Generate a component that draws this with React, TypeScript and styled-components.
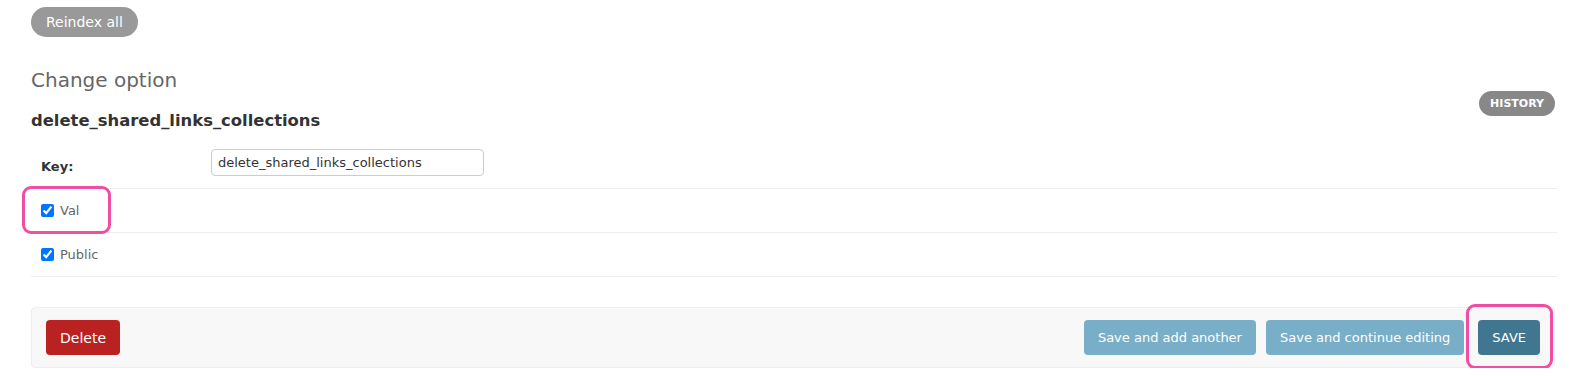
import React from "react";
import styled, { createGlobalStyle } from "styled-components";

const Global = createGlobalStyle`
  html, body { margin: 0; padding: 0; background: #fff; }
  body { font-family: "DejaVu Sans", Verdana, sans-serif; color: #333; font-size: 13px; }
`;

const Page = styled.div`
  padding: 7px 17px 0 31px;
  width: 1570px;
  box-sizing: border-box;
`;

const PillButton = styled.button`
  background: #999;
  color: #fff;
  border: none;
  border-radius: 15px;
  height: 30px;
  padding: 0 15px;
  font-family: inherit;
  font-size: 14px;
  cursor: pointer;
`;

const Heading = styled.h1`
  margin: 31px 0 0;
  font-size: 20px;
  font-weight: 400;
  color: #666;
  line-height: 24px;
`;

const TitleBar = styled.div`
  display: flex;
  justify-content: space-between;
  align-items: flex-start;
  margin-right: -2px;
`;

const Title = styled.h2`
  margin: 19px 0 0;
  font-size: 16.4px;
  font-weight: 700;
  color: #333;
  line-height: 20px;
`;

const HistoryButton = styled.a`
  margin-top: -1px;
  background: #888;
  color: #fff;
  border-radius: 13px;
  height: 25px;
  padding: 0 11px;
  display: inline-flex;
  align-items: center;
  font-size: 11px;
  font-weight: 700;
  letter-spacing: 0;
  text-transform: uppercase;
`;

const Fieldset = styled.div`
  margin-top: 10px;
`;

const Row = styled.div<{ $h: number }>`
  position: relative;
  display: flex;
  align-items: center;
  height: ${(p) => p.$h}px;
  box-sizing: border-box;
  padding: 0 10px;
  border-bottom: 1px solid #eee;
  margin-right: -4px;
`;

const KeyLabel = styled.label`
  width: 170px;
  font-weight: 700;
  font-size: 13px;
  color: #333;
  padding-top: 4px;
`;

const TextInput = styled.input`
  width: 273px;
  height: 27px;
  margin-bottom: 5px;
  box-sizing: border-box;
  border: 1px solid #ccc;
  border-radius: 4px;
  padding: 0 6px;
  font-family: inherit;
  font-size: 13px;
  color: #333;
`;

const CheckLabel = styled.label`
  display: flex;
  align-items: center;
  gap: 6px;
  font-size: 13px;
  color: #666;
`;

const Checkbox = styled.input`
  margin: 0;
  width: 13px;
  height: 13px;
`;

const Highlight = styled.span<{ $l: number; $t: number; $w: number; $h: number }>`
  position: absolute;
  left: ${(p) => p.$l}px;
  top: ${(p) => p.$t}px;
  width: ${(p) => p.$w}px;
  height: ${(p) => p.$h}px;
  border: 3px solid #ee4fa3;
  border-radius: 9px;
  box-sizing: border-box;
  pointer-events: none;
`;

const SubmitRow = styled.div`
  position: relative;
  margin-top: 30px;
  margin-right: -2px;
  height: 61px;
  box-sizing: border-box;
  background: #f8f8f8;
  border: 1px solid #eee;
  border-radius: 4px;
  display: flex;
  align-items: center;
  padding: 0 14px;
  gap: 10px;
`;

const Spacer = styled.div`
  flex: 1;
`;

const ActionButton = styled.button<{ $variant: "delete" | "light" | "primary" }>`
  height: 35px;
  border: none;
  border-radius: 4px;
  padding: 0 14px;
  font-family: inherit;
  font-size: ${(p) => (p.$variant === "delete" ? "14px" : "13px")};
  color: #fff;
  cursor: pointer;
  background: ${(p) =>
    p.$variant === "delete" ? "#ba2121" : p.$variant === "primary" ? "#417690" : "#79aec8"};
  ${(p) => (p.$variant === "primary" ? "margin-left: 4px;" : "")}
`;

export default function App() {
  return (
    <>
      <Global />
      <Page>
        <PillButton>Reindex all</PillButton>
        <Heading>Change option</Heading>
        <TitleBar>
          <Title>delete_shared_links_collections</Title>
          <HistoryButton>History</HistoryButton>
        </TitleBar>
        <Fieldset>
          <Row $h={48}>
            <KeyLabel>Key:</KeyLabel>
            <TextInput defaultValue="delete_shared_links_collections" />
          </Row>
          <Row $h={44}>
            <CheckLabel>
              <Checkbox type="checkbox" defaultChecked />
              Val
            </CheckLabel>
            <Highlight $l={-9} $t={-3} $w={89} $h={48} />
          </Row>
          <Row $h={44}>
            <CheckLabel>
              <Checkbox type="checkbox" defaultChecked />
              Public
            </CheckLabel>
          </Row>
        </Fieldset>
        <SubmitRow>
          <ActionButton $variant="delete">Delete</ActionButton>
          <Spacer />
          <ActionButton $variant="light">Save and add another</ActionButton>
          <ActionButton $variant="light">Save and continue editing</ActionButton>
          <ActionButton $variant="primary">SAVE</ActionButton>
          <Highlight $l={1434} $t={-4} $w={87} $h={65} />
        </SubmitRow>
      </Page>
    </>
  );
}
